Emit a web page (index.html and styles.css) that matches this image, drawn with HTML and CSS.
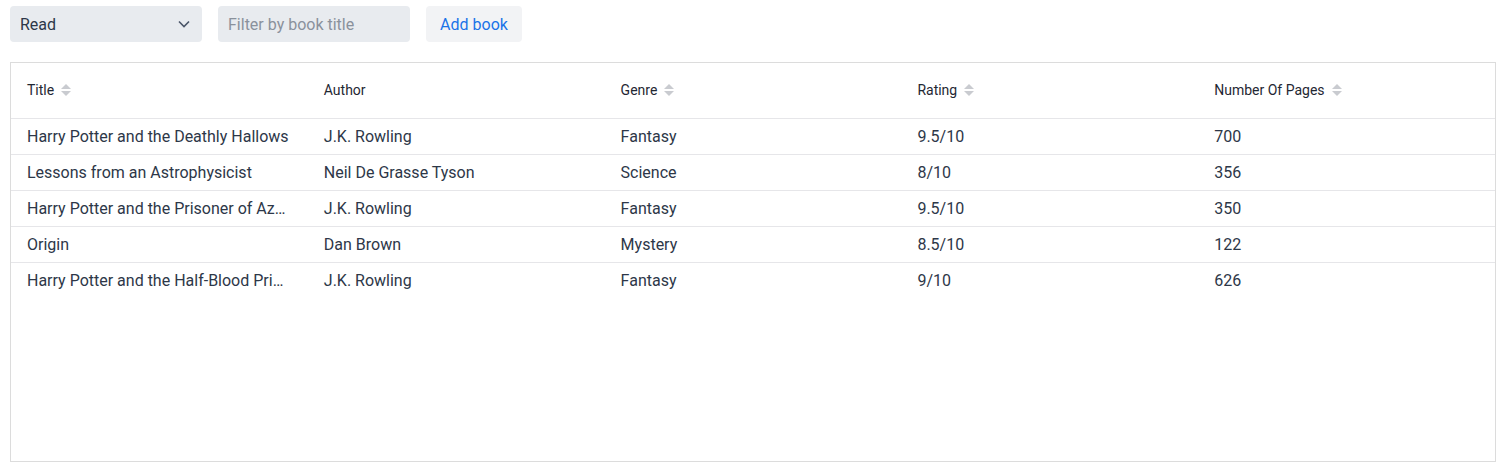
FILE: index.html
```html
<!DOCTYPE html>
<html>
<head>
<meta charset="utf-8">
<link rel="stylesheet" href="styles.css">
</head>
<body>
<div class="toolbar">
  <div class="select">
    <span>Read</span>
    <svg class="chev" width="12" height="8" viewBox="0 0 12 8"><path d="M1 1.5 L6 6.5 L11 1.5" fill="none" stroke="#4a5568" stroke-width="1.6"/></svg>
  </div>
  <div class="input">Filter by book title</div>
  <button class="btn">Add book</button>
</div>
<div class="table">
  <div class="row head">
    <div class="cell">Title <span class="sort"><i class="up"></i><i class="down"></i></span></div>
    <div class="cell">Author</div>
    <div class="cell">Genre <span class="sort"><i class="up"></i><i class="down"></i></span></div>
    <div class="cell">Rating <span class="sort"><i class="up"></i><i class="down"></i></span></div>
    <div class="cell">Number Of Pages <span class="sort"><i class="up"></i><i class="down"></i></span></div>
  </div>
  <div class="row">
    <div class="cell">Harry Potter and the Deathly Hallows</div>
    <div class="cell">J.K. Rowling</div>
    <div class="cell">Fantasy</div>
    <div class="cell">9.5/10</div>
    <div class="cell">700</div>
  </div>
  <div class="row">
    <div class="cell">Lessons from an Astrophysicist</div>
    <div class="cell">Neil De Grasse Tyson</div>
    <div class="cell">Science</div>
    <div class="cell">8/10</div>
    <div class="cell">356</div>
  </div>
  <div class="row">
    <div class="cell">Harry Potter and the Prisoner of Azkaban</div>
    <div class="cell">J.K. Rowling</div>
    <div class="cell">Fantasy</div>
    <div class="cell">9.5/10</div>
    <div class="cell">350</div>
  </div>
  <div class="row">
    <div class="cell">Origin</div>
    <div class="cell">Dan Brown</div>
    <div class="cell">Mystery</div>
    <div class="cell">8.5/10</div>
    <div class="cell">122</div>
  </div>
  <div class="row last">
    <div class="cell">Harry Potter and the Half-Blood Prince</div>
    <div class="cell">J.K. Rowling</div>
    <div class="cell">Fantasy</div>
    <div class="cell">9/10</div>
    <div class="cell">626</div>
  </div>
</div>
</body>
</html>
```
FILE: styles.css
```css
* { box-sizing: border-box; }
body {
  margin: 0;
  padding: 6px 7px 0 10px;
  font-family: Roboto, "Liberation Sans", sans-serif;
  color: #2d3748;
  background: #fff;
}
.toolbar {
  display: flex;
  gap: 16px;
  height: 36px;
}
.select {
  width: 192px;
  background: #e8ebef;
  border-radius: 4px;
  display: flex;
  align-items: center;
  justify-content: space-between;
  padding: 0 12px 0 10px;
  font-size: 16px;
  color: #2d3748;
}
.chev { display: block; }
.input {
  width: 192px;
  background: #e8ebef;
  border-radius: 4px;
  display: flex;
  align-items: center;
  padding: 0 10px;
  font-size: 16px;
  color: #8a919c;
}
.btn {
  width: 96px;
  border: none;
  background: #f2f3f5;
  border-radius: 4px;
  font-family: inherit;
  font-size: 16px;
  color: #1a73e8;
  padding: 0;
}
.table {
  margin-top: 20px;
  height: 400px;
  border: 1px solid #dcdcdc;
}
.row {
  display: grid;
  grid-template-columns: repeat(5, 1fr);
  height: 36px;
  border-bottom: 1px solid #e6e6e9;
  align-items: center;
  font-size: 16px;
}
.row.last { border-bottom: none; height: 35px; }
.row.head {
  height: 56px;
  font-size: 14px;
  color: #1f2733;
  padding-bottom: 2px;
}
.cell {
  padding: 0 16px;
  white-space: nowrap;
  overflow: hidden;
  text-overflow: ellipsis;
  display: flex;
  align-items: center;
}
.row:not(.head) .cell { display: block; }
.sort {
  display: inline-flex;
  flex-direction: column;
  gap: 2px;
  margin-left: 7px;
}
.sort i {
  display: block;
  width: 0;
  height: 0;
  border-left: 5px solid transparent;
  border-right: 5px solid transparent;
}
.sort .up { border-bottom: 5px solid #c9cbd0; }
.sort .down { border-top: 5px solid #c9cbd0; }
```
